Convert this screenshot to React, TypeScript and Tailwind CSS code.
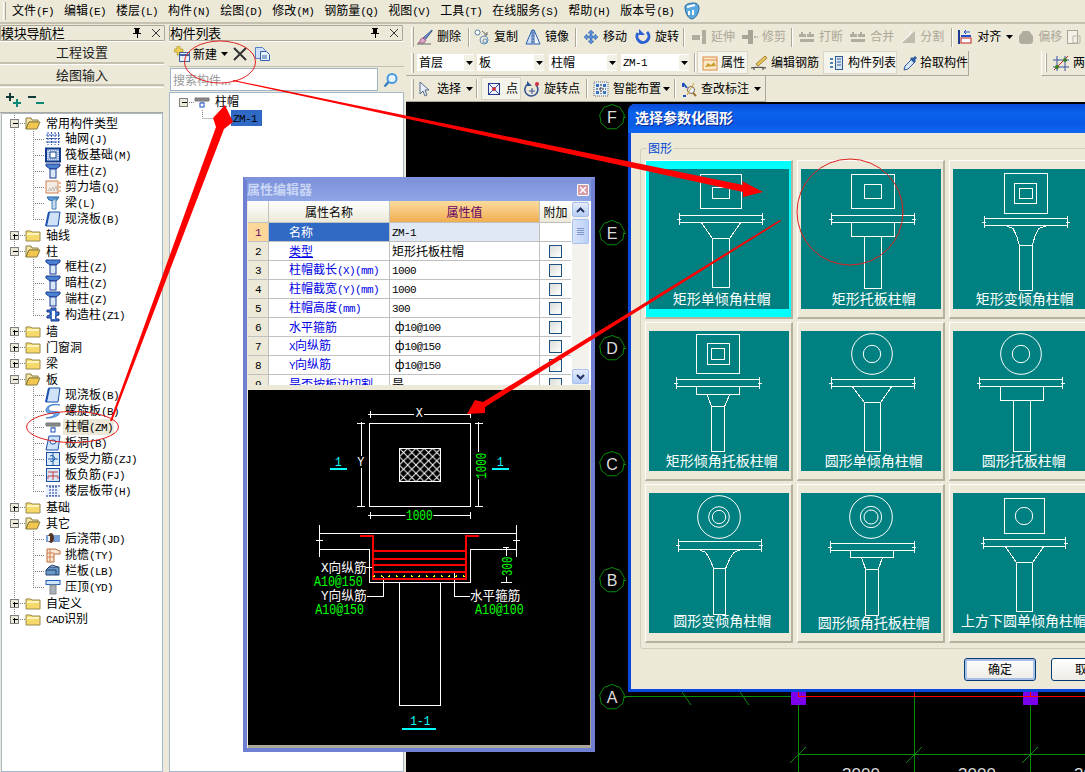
import React from "react";

const Latin = "font-['Liberation_Mono',monospace] text-[11px] tracking-[-0.6px]";

function Tx({ t }: { t: string }) {
  const parts = t.split(/([\x21-\x7e]+)/).filter(Boolean);
  return (
    <span className="whitespace-pre">
      {parts.map((p, i) => (/^[\x21-\x7e]+$/.test(p) ? <span key={i} className={Latin}>{p}</span> : <span key={i}>{p}</span>))}
    </span>
  );
}

const S = ({ children, w = 16, h = 16 }: { children: React.ReactNode; w?: number; h?: number }) => (
  <svg width={w} height={h} viewBox={`0 0 ${w} ${h}`} className="shrink-0 block">{children}</svg>
);

const ICONS: Record<string, React.ReactNode> = {
  folderOpen: <><path d="M1 3h5l1 2h6v2H4L1 14z" fill="#f5e6a8" stroke="#8a7a40" /><path d="M1 14l3-7h11l-3 7z" fill="#f0c850" stroke="#8a7a40" /></>,
  folderClosed: <><path d="M1 4h5l1 1h8v9H1z" fill="#f7d96a" stroke="#9a8a50" /><path d="M2 6h12v2H2z" fill="#fff3c0" /></>,
  grid: <path d="M3 1v13M6.5 1v13M10 1v13M13.500 1v13M1 4h14M1 7.500h14M1 11h14" stroke="#2a50b0" fill="none" strokeDasharray="2 1" />,
  raft: <><rect x="1" y="1.500" width="14" height="13" fill="#cfe0f5" stroke="#103a8a" strokeWidth="2" /><rect x="5" y="5" width="6" height="6" fill="#fff" stroke="#103a8a" /><path d="M3 3v10M13 3v10M3 3h10M3 13h10" stroke="#5a80c0" strokeDasharray="1 1" /></>,
  col: <><path d="M1 1h14v2l-4 3H5L1 3z" fill="#4a80d0" stroke="#1a3a90" /><rect x="5" y="6" width="6" height="9" fill="#d8e6f8" stroke="#1a3a90" /></>,
  wall: <><rect x="1" y="2" width="12" height="12" fill="#f4ece0" stroke="#d08050" /><path d="M3 12l2-3 1 3 2-4 1 4 2-5 1 5" stroke="#999" fill="none" strokeDasharray="1 1" /><path d="M14 4h2M14 8h2M14 12h2" stroke="#e07020" /></>,
  beam: <><path d="M2 2h12l-3 4-7-1z" fill="#60a0e0" stroke="#2060a0" /><path d="M7 6l4-3v11H7z" fill="#c8dcf0" stroke="#4080b0" /></>,
  slab: <><path d="M4 1h11l-2 14H1z" fill="#cfe2f8" stroke="#1a50b0" /><path d="M4 1l-3 14" stroke="#1a50b0" strokeWidth="2" /></>,
  gz: <><path d="M6 1h5v4h3v3l-3 1v3h3v2H6v-3H2V9l3-1V5H2V3h4z" fill="#3a70c8" stroke="#1a3a90" /><rect x="7" y="4" width="3" height="8" fill="#fff" /></>,
  spiral: <><path d="M15 2C8 1 2 3 4 7c1 2 6 1 10 2 2 2-2 5-9 6H1c5-1 9-2 8-4-3-1-7 0-8-3C0 3 8 0 15 2z" fill="#6aa8e8" stroke="#2a70c0" strokeWidth=".7" /></>,
  cap: <><path d="M1 4h14v3H1z" fill="#888" stroke="#777" /><path d="M6 7h5l-1 2H7z" fill="#aaa" /><rect x="6" y="9" width="4" height="4" fill="#fff" stroke="#1a50c0" /></>,
  hole: <><path d="M4 1h11l-2 14H1z" fill="#cfe2f8" stroke="#1a50b0" /><ellipse cx="8" cy="7" rx="3" ry="2" fill="#fff" stroke="#1a50b0" /></>,
  rs: <><rect x="1.500" y="1.500" width="13" height="13" fill="#d8e8f8" stroke="#1a50a0" /><path d="M8 2v12M3 8h10M5 5a3 3 0 1 1 0 5" stroke="#2060b0" fill="none" /></>,
  rn: <><rect x="1.500" y="1.500" width="13" height="13" fill="#d8e8f8" stroke="#1a50a0" /><path d="M3 5h10M3 9h10M8 5v8M3 9v3M13 9v3" stroke="#c04040" fill="none" /></>,
  band: <><rect x="1" y="2" width="14" height="12" fill="#eaf2fb" /><path d="M1 3h14M1 13h14M5 3v10M11 3v10M8 3v10" stroke="#1a3a90" fill="none" strokeDasharray="2 1" /></>,
  hou: <><rect x="1" y="4" width="14" height="7" fill="#7aa0d8" /><ellipse cx="6" cy="7" rx="3" ry="5" fill="#553322" /><rect x="3" y="5" width="2" height="5" fill="#eee" /></>,
  tiao: <><path d="M2 2h8l5 2v3h-6v8H2z" fill="#f8e8d8" stroke="#c06830" /><path d="M2 6h7M2 10h7M5 2v13" stroke="#d08050" /></>,
  lan: <><path d="M1 7l3-3h10v8H1z" fill="#6a98c8" stroke="#204070" /><path d="M4 4l3-2 6 2M1 7h10v5" stroke="#204070" fill="none" /></>,
  ya: <><rect x="1" y="1.500" width="14" height="4" fill="#d0e4f8" stroke="#2060c0" /><rect x="5" y="6" width="6" height="9" fill="#aab0b8" stroke="#888" /></>,
  del: <><path d="M15 1L6 9l2 2 7-9z" fill="#7090d0" stroke="#405890" /><path d="M6 9c-2 0-3 2-3 3s-1 1-2 2h6l2-3z" fill="#e0a8c8" stroke="#a06080" /><path d="M0 15h14" stroke="#666" /></>,
  copy: <><circle cx="3.500" cy="3.500" r="2.500" fill="#fff" stroke="#5080a0" /><circle cx="10" cy="11" r="4" fill="none" stroke="#6090c0" /><circle cx="11" cy="12" r="2" fill="none" stroke="#6090c0" /><path d="M8 2l5 4M13 3v3h-3" stroke="#666" fill="none" /></>,
  mirror: <><path d="M7 1L1 15h6z" fill="#cfe0f5" stroke="#2a60b0" /><path d="M9 1l6 14H9z" fill="#eef4fb" stroke="#2a60b0" /><path d="M8 0v16" stroke="#2a60b0" strokeDasharray="2 1" /></>,
  move: <path d="M8 1l3 3H9v3h3V5l3 3-3 3V9H9v3h2l-3 3-3-3h2V9H4v2L1 8l3-3v2h3V4H5z" fill="#5a90d8" stroke="#2a5aa0" strokeWidth=".5" />,
  rotate: <><path d="M3 4a6 6 0 1 0 9-1" fill="none" stroke="#2a60d0" strokeWidth="3" /><path d="M4 0v6h6z" fill="#2a60d0" /></>,
  extend: <><rect x="1" y="6" width="8" height="5" fill="#b0ad9e" /><rect x="11" y="1" width="4" height="14" fill="#b0ad9e" /><path d="M9 8h2" stroke="#fff" /></>,
  trim: <><rect x="6" y="1" width="5" height="14" fill="#a8a596" /><rect x="0" y="6" width="6" height="4" fill="#a8a596" /><path d="M12 8h4" stroke="#b8b5a6" strokeWidth="2" strokeDasharray="2 1" /></>,
  brk: <><path d="M2 3h2v2h3v3H0V5h2zM10 3h2v2h3v3H8V5h2z" fill="#b0ad9e" /><rect x="1" y="10" width="14" height="3" fill="#b0ad9e" /></>,
  split: <><path d="M1 14L10 6l5-4v12z" fill="#c0bdae" /><path d="M1 14l9-8 1-4" stroke="#fff" fill="none" /></>,
  align: <><path d="M2 1v14" stroke="#1a3a90" strokeWidth="2" /><rect x="4" y="9" width="10" height="5" fill="#fff" stroke="#c02020" /><path d="M4 7h10" stroke="#2050d0" strokeWidth="2" /><path d="M13 3H7l2-2M7 3l2 2" stroke="#2050d0" fill="none" /></>,
  offset: <path d="M5 2h6l4 5v6l-2 2H3l-2-2V7z" fill="#b0ad9e" />,
  doc: <><rect x="1.500" y="1.500" width="10" height="13" fill="#f4f2e8" stroke="#a8a596" /><path d="M7 7h7v7H7z" fill="none" stroke="#b8b5a6" /></>,
  attr: <><rect x="1" y="2" width="14" height="13" fill="#fbe8c8" stroke="#e08a40" /><path d="M1 5h14" stroke="#e08a40" /><path d="M3 12l3-4 3 2 3-3 2 4z" fill="#c8a030" /></>,
  edit: <><path d="M5 9L14 1l2 2-9 8z" fill="#f0c860" stroke="#a08030" /><path d="M0 13c4-1 10-1 15 0" stroke="#333" fill="none" /><path d="M3 13v2M12 13v2" stroke="#333" /></>,
  list: <><rect x="7.500" y="1.500" width="7" height="13" fill="#d8e6f8" stroke="#305a90" /><path d="M9 4h4M9 7h4M9 10h4" stroke="#305a90" /><path d="M2 3h3v2H2zM2 7h3v2H2zM2 11h3v2H2z" fill="#5080b0" /></>,
  pick: <><path d="M2 15l1-4 7-7 3 3-7 7z" fill="#d8e6f8" stroke="#2a5aa0" /><path d="M10 2l1 1 2-2 2 2-2 2 1 1-2 2-4-4z" fill="#2a5aa0" /></>,
  arrow: <path d="M3 1v12l3-3 2 5 2-1-2-5h4z" fill="#e8eef8" stroke="#5a6a8a" />,
  point: <><rect x="2.500" y="2.500" width="11" height="11" fill="#eef2fa" stroke="#2a3a90" /><path d="M3 3l10 10M13 3L3 13" stroke="#3050c0" /><circle cx="8" cy="8" r="2" fill="#d03040" /></>,
  rotp: <><path d="M12 4a6.500 6.500 0 1 1-8-1" fill="none" stroke="#305090" strokeWidth="1.500" /><path d="M3 0v5h5" fill="#305090" /><circle cx="13" cy="3" r="2" fill="#d03040" /><path d="M8 7v6M5 10h6" stroke="#305090" /></>,
  smart: <><rect x="1" y="1" width="14" height="14" fill="#e8f0f8" stroke="#666" strokeDasharray="1 1" /><path d="M8 3v10M3 8h10" stroke="#223" strokeDasharray="2 1" /><path d="M3 3h3v3H3zM10 3h3v3h-3zM3 10h3v3H3zM10 10h3v3h-3z" fill="#3a70c0" /></>,
  mark: <><path d="M2 2l4 5M2 15h3M2 2v4" stroke="#2050c0" strokeWidth="2" fill="none" /><circle cx="10" cy="9" r="3.500" fill="#e8f4ff" stroke="#806040" /><path d="M12 12l3 3" stroke="#a07030" strokeWidth="2" /><path d="M6 14L13 2" stroke="#d0a040" /></>,
  two: <><path d="M4 1v15M12 1v15M0 5h16M0 12h16" stroke="#3a50a0" /><path d="M1 15L15 1" stroke="#d02020" /><circle cx="12" cy="5" r="2" fill="#3a8020" /><circle cx="4" cy="12" r="2" fill="#3a8020" /></>,
  plus: <><path d="M3 0h3v3h3v3H6v3H3V6H0V3h3z" fill="#f0d050" stroke="#a08820" strokeWidth=".6" /><rect x="5.500" y="6.500" width="10" height="9" fill="#e8eef8" stroke="#4060a0" /><path d="M6 9h9" stroke="#4060a0" strokeWidth="2" /></>,
  copyDoc: <><path d="M1.500 1.500h7l3 3v8h-10z" fill="#d0e0f8" stroke="#5080c0" /><path d="M6.500 5.500h6l3 3v6h-9z" fill="#e8f0fb" stroke="#3060b0" /><path d="M8 10h5M8 12h5" stroke="#3060b0" /></>,
  search: <><circle cx="9" cy="6.500" r="4.500" fill="#e8f4ff" stroke="#4a9ae0" strokeWidth="2" /><path d="M5.500 10L1.500 14.500" stroke="#3a80c0" strokeWidth="2.500" /></>,
};

function I({ n }: { n: string }) {
  return <S>{ICONS[n]}</S>;
}

type Row = { l: 0 | 1; n: string; t: string; open?: boolean; last?: boolean; sel?: boolean };
const ROWS: Row[] = [
  { l: 0, n: "folderOpen", t: "常用构件类型", open: true },
  { l: 1, n: "grid", t: "轴网(J)" },
  { l: 1, n: "raft", t: "筏板基础(M)" },
  { l: 1, n: "col", t: "框柱(Z)" },
  { l: 1, n: "wall", t: "剪力墙(Q)" },
  { l: 1, n: "beam", t: "梁(L)" },
  { l: 1, n: "slab", t: "现浇板(B)", last: true },
  { l: 0, n: "folderClosed", t: "轴线" },
  { l: 0, n: "folderOpen", t: "柱", open: true },
  { l: 1, n: "col", t: "框柱(Z)" },
  { l: 1, n: "col", t: "暗柱(Z)" },
  { l: 1, n: "col", t: "端柱(Z)" },
  { l: 1, n: "gz", t: "构造柱(Z1)", last: true },
  { l: 0, n: "folderClosed", t: "墙" },
  { l: 0, n: "folderClosed", t: "门窗洞" },
  { l: 0, n: "folderClosed", t: "梁" },
  { l: 0, n: "folderOpen", t: "板", open: true },
  { l: 1, n: "slab", t: "现浇板(B)" },
  { l: 1, n: "spiral", t: "螺旋板(B)" },
  { l: 1, n: "cap", t: "柱帽(ZM)", sel: true },
  { l: 1, n: "hole", t: "板洞(B)" },
  { l: 1, n: "rs", t: "板受力筋(ZJ)" },
  { l: 1, n: "rn", t: "板负筋(FJ)" },
  { l: 1, n: "band", t: "楼层板带(H)", last: true },
  { l: 0, n: "folderClosed", t: "基础" },
  { l: 0, n: "folderOpen", t: "其它", open: true },
  { l: 1, n: "hou", t: "后浇带(JD)" },
  { l: 1, n: "tiao", t: "挑檐(TY)" },
  { l: 1, n: "lan", t: "栏板(LB)" },
  { l: 1, n: "ya", t: "压顶(YD)", last: true },
  { l: 0, n: "folderClosed", t: "自定义" },
  { l: 0, n: "folderClosed", t: "CAD识别" },
];

function Box({ x, y, open }: { x: number; y: number; open?: boolean }) {
  return (
    <g shapeRendering="crispEdges">
      <rect x={x - 4} y={y - 4} width="8" height="8" fill="#ece9d8" stroke="#808080" />
      <path d={`M${x - 2} ${y}h5`} stroke="#000" />
      {!open && <path d={`M${x} ${y - 2}v5`} stroke="#000" />}
    </g>
  );
}

function Prefix({ r, end }: { r: Row; end?: boolean }) {
  const dot = { stroke: "#808080", strokeDasharray: "1 1", fill: "none", shapeRendering: "crispEdges" as const };
  if (r.l === 0) {
    return (
      <S w={23}>
        <path d={end ? "M12.500 0v8" : "M12.500 0v16"} {...dot} />
        <path d="M16 8.500h7" {...dot} />
        <Box x={12.5} y={8.5} open={r.open} />
      </S>
    );
  }
  return (
    <S w={43}>
      <path d="M12.500 0v16" {...dot} />
      <path d={r.last ? "M31.500 0v8" : "M31.500 0v16"} {...dot} />
      <path d="M31 8.500h12" {...dot} />
    </S>
  );
}

function DockHeader({ title, w }: { title: string; w: string }) {
  return (
    <div className={`mt-[1px] h-[16px] ${w} flex items-center border border-[#aca899] rounded-[1px] bg-[#ece9d8] shrink-0`}>
      <span className="flex-1 text-[13px] leading-none pb-[2px] text-black tracking-[-0.3px]">{title}</span>
      <svg width="12" height="12" viewBox="0 0 12 12" className="mr-[8px]"><path d="M3 1h6v1H8v4h2v1H7v4H6V7H2V6h2V2H3z" fill="#000" /></svg>
      <svg width="10" height="10" viewBox="0 0 10 10" className="mr-[3px]"><path d="M1 1l8 8M9 1l-8 8" stroke="#333" /></svg>
    </div>
  );
}

function NavPanel() {
  return (
    <div className="w-[165px] flex flex-col shrink-0">
      <DockHeader title="模块导航栏" w="w-[165px]" />
      <div className="h-[23px] w-[164px] flex items-center justify-center border-t border-t-white border-b-2 border-b-[#c4c1b0] text-[13px] text-[#222]">工程设置</div>
      <div className="h-[22px] w-[164px] flex items-center justify-center border-t border-t-white border-b-2 border-b-[#c4c1b0] text-[13px] text-[#222]">绘图输入</div>
      <div className="h-[26px] w-[163px] mt-[1px] flex items-center gap-[6px] pl-[6px] border-t border-t-white border-b border-b-[#aca899]">
        <svg width="16" height="15" viewBox="0 0 16 15"><path d="M4 0v8M0 4h8" stroke="#123a3a" strokeWidth="2" /><path d="M11 6v8M7 10h8" stroke="#0a8878" strokeWidth="2" /></svg>
        <svg width="16" height="12" viewBox="0 0 16 12"><path d="M0 3h8" stroke="#123a3a" strokeWidth="2" /><path d="M8 9h8" stroke="#0a8878" strokeWidth="2" /></svg>
      </div>
      <div className="ml-[1px] w-[162px] flex-1 bg-white border border-[#a8b8cc] pt-[1px] text-[12px] text-black leading-none">
        {ROWS.map((r, i) => (
          <div key={i} className="h-[16px] flex items-center">
            <Prefix r={r} end={i === ROWS.length - 1} />
            <I n={r.n} />
            <span className={r.sel ? "bg-[#ece9d8] h-[16px] flex items-center ml-[2px] pl-[2px] pr-[1px]" : r.l === 0 ? "ml-[5px]" : "ml-[4px]"}><Tx t={r.t} /></span>
          </div>
        ))}
      </div>
    </div>
  );
}

function ListPanel() {
  return (
    <div className="w-[235px] ml-[4px] flex flex-col shrink-0">
      <DockHeader title="构件列表" w="w-[234px]" />
      <div className="h-[26px] flex items-center pl-[5px] border-t border-t-white border-b border-b-[#c4c1b0] text-[12px]">
        <I n="plus" />
        <span className="ml-[3px] text-black">新建</span>
        <svg width="7" height="4" viewBox="0 0 7 4" className="ml-[4px]"><path d="M0 0h7L3.500 4z" fill="#000" /></svg>
        <svg width="14" height="14" viewBox="0 0 14 14" className="ml-[5px]"><path d="M1 1l12 12M13 1L1 13" stroke="#333" strokeWidth="2" /></svg>
        <span className="ml-[7px]"><I n="copyDoc" /></span>
      </div>
      <div className="h-[25px] flex items-center pl-[1px] gap-[5px]">
        <div className="w-[208px] h-[23px] bg-white border border-[#a0b4cc] flex items-center pl-[2px] text-[12px] text-[#999]">搜索构件...</div>
        <I n="search" />
      </div>
      <div className="flex-1 bg-white border border-[#a8b8cc] text-[12px] text-black leading-none pt-[1px]">
        <div className="h-[16px] flex items-center">
          <S w={24}>
            <Box x={13.5} y={8.5} open />
            <path d="M17 8.500h7" stroke="#808080" strokeDasharray="1 1" />
          </S>
          <I n="cap" />
          <span className="ml-[5px] pb-[2px]">柱帽</span>
        </div>
        <div className="h-[16px] flex items-center">
          <S w={61}>
            <path d="M32.500 0v8M32.500 8.500H61" stroke="#808080" strokeDasharray="1 1" fill="none" />
          </S>
          <span className="h-[16px] w-[31px] bg-[#316ac5] flex items-center pl-[2px] text-black"><Tx t="ZM-1" /></span>
        </div>
      </div>
    </div>
  );
}

function Grip() {
  return <span className="w-[3px] h-[20px] ml-[5px] border-l border-l-white border-r border-r-[#aca899] bg-[#ece9d8] shrink-0" />;
}
function Sep({ c }: { c: string }) {
  return <span className={`w-[2px] h-[19px] border-l border-l-[#aca899] border-r border-r-white shrink-0 ${c}`} />;
}
function Btn({ n, t, c = "", off }: { n: string; t: string; c?: string; off?: boolean }) {
  return (
    <span className={`flex items-center gap-[4px] shrink-0 ${c} ${off ? "text-[#aca899]" : "text-black"}`}>
      <I n={n} />
      <span className="pb-[2px]">{t}</span>
    </span>
  );
}
function Caret({ c = "" }: { c?: string }) {
  return <svg width="7" height="4" viewBox="0 0 7 4" className={`shrink-0 ${c}`}><path d="M0 0h7L3.500 4z" fill="#000" /></svg>;
}
function Sel({ t, w, c }: { t: string; w: string; c: string }) {
  return (
    <span className={`h-[17px] ${w} ${c} bg-white flex items-center pl-[2px] shrink-0 text-black`}>
      <span className="flex-1 pb-[2px]"><Tx t={t} /></span>
      <span className="w-[10px] h-[15px] bg-[#f3f1e6] flex items-center justify-center"><Caret /></span>
    </span>
  );
}

function Toolbars() {
  return (
    <div className="shrink-0 text-[12px] leading-none">
      <div className="h-[26px] flex items-center overflow-hidden">
        <Grip />
        <Btn n="del" t="删除" c="ml-[3px]" />
        <Sep c="ml-[7px]" />
        <Btn n="copy" t="复制" c="ml-[4px]" />
        <Btn n="mirror" t="镜像" c="ml-[7px]" />
        <Sep c="ml-[6px]" />
        <Btn n="move" t="移动" c="ml-[6px]" />
        <Btn n="rotate" t="旋转" c="ml-[8px]" />
        <Sep c="ml-[4px]" />
        <Btn n="extend" t="延伸" c="ml-[6px]" off />
        <Btn n="trim" t="修剪" c="ml-[7px]" off />
        <Sep c="ml-[5px]" />
        <Btn n="brk" t="打断" c="ml-[6px]" off />
        <Btn n="brk" t="合并" c="ml-[7px]" off />
        <Btn n="split" t="分割" c="ml-[6px]" off />
        <Sep c="ml-[7px]" />
        <Btn n="align" t="对齐" c="ml-[4px]" />
        <Caret c="ml-[5px]" />
        <Btn n="offset" t="偏移" c="ml-[5px]" off />
        <Btn n="doc" t="" c="ml-[4px]" off />
      </div>
      <div className="h-[26px] flex items-center overflow-hidden">
        <div className="w-[569px] h-[25px] flex items-center border-r border-b border-[#aca899]">
          <Grip />
          <Sel t="首层" w="w-[57px]" c="ml-[3px]" />
          <Sel t="板" w="w-[67px]" c="ml-[3px]" />
          <Sel t="柱帽" w="w-[68px]" c="ml-[5px]" />
          <Sel t="ZM-1" w="w-[68px]" c="ml-[4px]" />
          <Sep c="ml-[5px]" />
          <span className="ml-[1px] h-[23px] w-[51px] bg-[#f4f3ec] border border-[#d8d5c6] flex items-center pl-[4px] gap-[3px] shrink-0 text-black"><I n="attr" /><span className="pb-[2px]">属性</span></span>
          <Btn n="edit" t="编辑钢筋" c="ml-[3px] gap-[3px]" />
          <span className="ml-[4px] h-[23px] w-[74px] bg-[#f4f3ec] border border-[#d8d5c6] flex items-center pl-[4px] gap-[4px] shrink-0 text-black"><I n="list" /><span className="pb-[2px]">构件列表</span></span>
          <Btn n="pick" t="拾取构件" c="ml-[5px] !gap-[2px]" />
        </div>
        <div className="ml-[72px] h-[25px] flex-1 flex items-center border-l border-l-white border-b border-[#aca899]">
          <span className="w-[2px] h-[19px] ml-[3px] border-l border-l-white border-r border-r-[#aca899]" />
          <Btn n="two" t="两点" c="ml-[6px]" />
        </div>
      </div>
      <div className="h-[26px] w-[360px] flex items-center border-r border-b border-[#aca899]">
        <Grip />
        <span className="ml-[3px]"><I n="arrow" /></span>
        <span className="ml-[4px] pb-[2px] text-black">选择</span>
        <Caret c="ml-[5px]" />
        <Sep c="ml-[3px]" />
        <span className="ml-[3px] h-[23px] w-[40px] bg-[#f4f3ec] border border-[#d8d5c6] flex items-center pl-[4px] gap-[4px] shrink-0"><I n="point" /><span className="pb-[2px]">点</span></span>
        <Btn n="rotp" t="旋转点" c="ml-[3px] gap-[3px]" />
        <Sep c="ml-[6px]" />
        <Btn n="smart" t="智能布置" c="ml-[5px]" />
        <Caret c="ml-[2px]" />
        <Sep c="ml-[4px]" />
        <Btn n="mark" t="查改标注" c="ml-[5px]" />
        <Caret c="ml-[5px]" />
      </div>
    </div>
  );
}

function Axis({ x, y, t }: { x: number; y: number; t: string }) {
  const pts = Array.from({ length: 9 }, (_, i) => {
    const a = (i * 2 * Math.PI) / 9 - Math.PI / 2;
    return `${x + 12.5 * Math.cos(a)},${y + 12.5 * Math.sin(a)}`;
  }).join(" ");
  return (
    <g>
      <polygon points={pts} fill="#000" stroke="#0a8a0a" />
      <path d={`M${x + 12} ${y + 0.5}h2`} stroke="#0a8a0a" />
      <text x={x} y={y + 6} textAnchor="middle" fontSize="16" fill="#ddd" fontFamily="Liberation Sans, sans-serif">{t}</text>
    </g>
  );
}

function Canvas() {
  const g = "#0a8a0a";
  return (
    <div className="flex-1 bg-black overflow-hidden">
      <svg width="679" height="670" viewBox="406 102 679 670" className="block">
        {[["F", 117], ["E", 233], ["D", 348], ["C", 464], ["B", 580], ["A", 697]].map(([t, y]) => (
          <Axis key={t as string} x={612} y={y as number} t={t as string} />
        ))}
        <g shapeRendering="crispEdges">
          <path d="M625 696.500H798" stroke={g} />
          <path d="M798.500 690V772M914.500 690V772M1030.500 690V772M798 754.500H1085" stroke={g} />
          <rect x="791" y="692" width="15" height="13" fill="#7a00ee" />
          <rect x="1023" y="692" width="15" height="13" fill="#7a00ee" />
          <path d="M798 696.500H1085M798.500 691v5M914.500 691v5M1030.500 691v5" stroke="#ff0000" />
        </g>
        <path d="M682 692l9 13M740 692l9 13M790 763l16-16M906 763l16-16M1022 763l16-16" stroke={g} />
        <g fill="#ddd" fontSize="17" fontFamily="Liberation Sans, sans-serif" textAnchor="middle">
          <text x="861" y="780">3000</text>
          <text x="977" y="780">3000</text>
          <text x="1093" y="780">3000</text>
        </g>
      </svg>
    </div>
  );
}

const PROPS = [
  ["柱帽截长(X)(mm)", "1000"],
  ["柱帽截宽(Y)(mm)", "1000"],
  ["柱帽高度(mm)", "300"],
  ["水平箍筋", " ф10@100"],
  ["X向纵筋", " ф10@150"],
  ["Y向纵筋", " ф10@150"],
  ["是否按板边切割", "是"],
];

function Check() {
  return <span className="w-[13px] h-[13px] border border-[#1c5180] bg-linear-to-br from-[#dcdcd7] to-white block" />;
}

function PropRow({ i, name, val, first, link }: { i: number; name: string; val: string; first?: boolean; link?: boolean }) {
  return (
    <div className="h-[19px] flex border-b border-[#c0c0c0] shrink-0">
      <div className={`w-[21px] flex items-center justify-center border-r border-[#c0c0c0] ${first ? "bg-[#fcd79a] text-[#660066]" : "bg-[#ece9d8] text-black"}`}><Tx t={String(i)} /></div>
      <div className={`w-[121px] flex items-center pl-[20px] border-r border-[#c0c0c0] ${first ? "bg-[#316ac5] text-white" : "bg-white text-[#0000e6]"}`}>
        {link ? <span className="underline">{name}</span> : <Tx t={name} />}
      </div>
      <div className={`w-[150px] flex items-center pl-[2px] border-r border-[#c0c0c0] text-black ${first ? "bg-[#dfe8f4]" : "bg-white"}`}><Tx t={val} /></div>
      <div className="w-[31px] flex items-center justify-center bg-white">{!first && <Check />}</div>
    </div>
  );
}

function SecText({ x, y, w, t, c = "#fff", fs = 39 }: { x: number; y: number; w: number; t: string; c?: string; fs?: number }) {
  return <text x={x} y={y} textLength={w} lengthAdjust="spacingAndGlyphs" fontSize={fs} fill={c} fontFamily="Liberation Mono, Noto Sans CJK SC, monospace">{t}</text>;
}

function Section() {
  const dots = Array.from({ length: 13 }, (_, i) => 403 + i * 22.4);
  return (
    <svg width="342" height="357" viewBox="24 0 1026 1071" className="block">
      <defs>
        <pattern id="hatch" width="25" height="25" patternUnits="userSpaceOnUse" x="478" y="175">
          <path d="M0 0L25 25M25 0L0 25" stroke="#fff" strokeWidth="3" />
        </pattern>
      </defs>
      <g fill="none" stroke="#fff" strokeWidth="3" shapeRendering="crispEdges">
        <path d="M385 72H692M390 64V84M690 64V84" />
        <rect x="388" y="100" width="304" height="249" />
        <rect x="478" y="175" width="124" height="99" fill="url(#hatch)" />
        <path d="M363 95V352M352 100H374M352 349H374" />
        <path d="M716 97V352M706 100H728M706 349H728" />
        <path d="M385 376H692M390 366V386M690 366V386" />
        <path d="M238 430H830M238 478H388M692 478H830M238 405V500M830 405V500M228 452H250M818 452H840" />
        <path d="M388 478V578H692V478M478 578V946H602V578" />
        <path d="M378 533H399M380 619H430V560M643 545V619H690" />
        <path d="M800 470V578M782 578H815M788 472H808" />
      </g>
      <g fill="none" stroke="#ff0000" strokeWidth="6" shapeRendering="crispEdges">
        <path d="M360 439H399V566H679V439H717" />
        <path d="M399 482H679M399 506H679M399 525H679M399 546H679" />
      </g>
      {dots.map((x) => <path key={x} d={`M${x - 3} 559H${x + 3}M${x} 556V562`} stroke="#ffff00" strokeWidth="3" shapeRendering="crispEdges" />)}
      <rect x="522" y="52" width="30" height="36" fill="#000" />
      <rect x="348" y="198" width="30" height="36" fill="#000" />
      <rect x="496" y="358" width="84" height="36" fill="#000" />
      <rect x="706" y="186" width="36" height="82" fill="#000" />
      <rect x="785" y="498" width="36" height="62" fill="#000" />
      <SecText x={527} y={81} w={21} t="X" />
      <SecText x={352} y={228} w={21} t="Y" />
      <SecText x={498} y={390} w={80} t="1000" c="#00ff00" fs={42} />
      <g transform="rotate(-90 737 266)"><SecText x={737} y={266} w={78} t="1000" c="#00ff00" fs={42} /></g>
      <g transform="rotate(-90 816 558)"><SecText x={816} y={558} w={58} t="300" c="#00ff00" fs={42} /></g>
      <SecText x={285} y={228} w={20} t="1" c="#00ffff" />
      <SecText x={771} y={228} w={20} t="1" c="#00ffff" />
      <path d="M270 237H321M756 237H807M486 1016H588" stroke="#00ffff" strokeWidth="5" shapeRendering="crispEdges" />
      <SecText x={511} y={1005} w={60} t="1-1" c="#00ffff" />
      <SecText x={243} y={546} w={137} t="X向纵筋" />
      <SecText x={222} y={588} w={146} t="A10@150" c="#00ff00" fs={42} />
      <SecText x={243} y={630} w={137} t="Y向纵筋" />
      <SecText x={226} y={672} w={146} t="A10@150" c="#00ff00" fs={42} />
      <SecText x={690} y={630} w={151} t="水平箍筋" />
      <SecText x={705} y={672} w={146} t="A10@100" c="#00ff00" fs={42} />
    </svg>
  );
}

function PropWindow() {
  return (
    <div className="absolute left-[243px] top-[177px] w-[352px] h-[575px] bg-[#ece9d8] border-[4px] border-[#6f7fd2] border-t-[#7f93dc] flex flex-col text-[12px] leading-none">
      <div className="h-[20px] pb-[3px] bg-linear-to-b from-[#7f93dc] to-[#8ea6e6] flex items-center shrink-0">
        <span className="flex-1 pb-[3px] text-[13px] font-bold text-[#c9d5f5]">属性编辑器</span>
        <span className="w-[12px] h-[12px] mr-[2px] bg-[#d79aa6] border border-white flex items-center justify-center rounded-[1px]">
          <svg width="8" height="8" viewBox="0 0 8 8"><path d="M1 1l6 6M7 1L1 7" stroke="#fff" strokeWidth="1.500" /></svg>
        </span>
      </div>
      <div className="h-[184px] flex overflow-hidden bg-white shrink-0 ml-[1px]">
        <div className="w-[323px] flex flex-col">
          <div className="h-[22px] flex border-b border-[#c0c0c0] text-center shrink-0">
            <div className="w-[21px] border-r border-[#c0c0c0] bg-linear-to-b from-white to-[#ece9d8]" />
            <div className="w-[121px] border-r border-[#c0c0c0] bg-linear-to-b from-white to-[#ece9d8] flex items-center justify-center text-black">属性名称</div>
            <div className="w-[150px] border-r border-[#c0c0c0] bg-linear-to-b from-[#fbdc9e] to-[#f0ae4e] flex items-center justify-center text-[#660066]">属性值</div>
            <div className="w-[31px] bg-linear-to-b from-white to-[#ece9d8] flex items-center justify-center text-black">附加</div>
          </div>
          <PropRow i={1} name="名称" val="ZM-1" first />
          <PropRow i={2} name="类型" val="矩形托板柱帽" link />
          {PROPS.map((p, i) => <PropRow key={i} i={i + 3} name={p[0]} val={p[1]} />)}
        </div>
        <div className="w-[17px] ml-[1px] bg-[#f3f2ec] flex flex-col py-[1px] shrink-0">
          <div className="h-[15px] bg-linear-to-b from-[#e4ecfb] to-[#b8cdf5] border border-[#a8c0ee] rounded-[2px] flex items-center justify-center">
            <svg width="9" height="6" viewBox="0 0 9 6"><path d="M1 5l3.500-3.500L8 5" stroke="#203060" strokeWidth="2" fill="none" /></svg>
          </div>
          <div className="h-[25px] mt-[2px] bg-linear-to-r from-[#d8e4fb] to-[#bcd0f6] border border-[#a8c0ee] rounded-[2px] flex flex-col gap-[1px] items-center justify-center">
            <span className="w-[7px] h-[1px] bg-[#7f97c8]" /><span className="w-[7px] h-[1px] bg-[#7f97c8]" /><span className="w-[7px] h-[1px] bg-[#7f97c8]" /><span className="w-[7px] h-[1px] bg-[#7f97c8]" />
          </div>
          <div className="flex-1" />
          <div className="h-[15px] bg-linear-to-b from-[#e4ecfb] to-[#b8cdf5] border border-[#a8c0ee] rounded-[2px] flex items-center justify-center">
            <svg width="9" height="6" viewBox="0 0 9 6"><path d="M1 1l3.500 3.500L8 1" stroke="#203060" strokeWidth="2" fill="none" /></svg>
          </div>
        </div>
      </div>
      <div className="mt-[5px] ml-[1px] flex-1 bg-black overflow-hidden border-b-[3px] border-r-[1px] border-[#aca899]">
        <Section />
      </div>
    </div>
  );
}

function Slab({ a, b, t, u }: { a: number; b: number; t: number; u: number }) {
  const m = (t + u) / 2;
  return <path d={`M${a} ${t}H${b}M${a} ${u}H${b}M${a} ${t - 7}V${u + 6}M${b} ${t - 7}V${u + 6}M${a - 7} ${m}H${a + 6}M${b - 6} ${m}H${b + 7}`} />;
}
const R = (x: number, y: number, x2: number, y2: number) => <rect x={x} y={y} width={x2 - x} height={y2 - y} />;
const C = (x: number, y: number, r: number) => <circle cx={x} cy={y} r={r} shapeRendering="auto" />;

function Cap({ title, tx, by, sel, children }: { title: string; tx: number; by: number; sel?: boolean; children: React.ReactNode }) {
  return (
    <div className={`w-[148px] h-[159px] pl-[4px] pt-[9px] border-t border-l border-r-2 border-b-2 border-t-white border-l-white border-r-[#b4b1a0] border-b-[#b4b1a0] ${sel ? "bg-[#00ffff]" : "bg-[#ece9d8]"}`}>
      <svg width="140" height="140" viewBox="0 0 420 420" className="block bg-[#008080] -ml-[1px] -mt-[1px]">
        <g fill="none" stroke="#fff" strokeWidth="3" shapeRendering="crispEdges">{children}</g>
        <text x={tx} y={by} fontSize="42" fill="#fff" fontFamily="Noto Sans CJK SC, sans-serif">{title}</text>
      </svg>
    </div>
  );
}

function Dialog() {
  return (
    <div className="absolute left-[628px] top-[104px] w-[520px] h-[588px] bg-[#ece9d8] border-[3px] border-t-0 border-[#0a48dc] rounded-tl-[7px] flex flex-col text-[12px] leading-none">
      <div className="h-[29px] -mx-[3px] pb-[3px] rounded-tl-[7px] bg-[linear-gradient(180deg,#0a4ad8_0%,#0a62ec_30%,#0a5ae6_70%,#1168f2_100%)] flex items-center pl-[7px] shrink-0">
        <span className="text-[14px] font-bold text-white [text-shadow:1px_1px_0_#0a2a90]">选择参数化图形</span>
      </div>
      <fieldset className="ml-[9px] mt-[8px] w-[470px] h-[508px] border border-[#d0cfbe] rounded-[3px] pl-[4px] pt-[4px] shrink-0">
        <legend className="ml-[2px] px-[1px] pb-[1px] text-[#0046d5] leading-[14px]">图形</legend>
        <div className="grid grid-cols-[148px_148px_148px] gap-x-[4px] gap-y-[3px]">
          <Cap title="矩形单倾角柱帽" tx={71} by={404} sel>
            {R(154, 16, 278, 119)}{R(190, 54, 242, 89)}
            <Slab a={91} b={341} t={140} u={161} />
            <path d="M157 161L190 208M275 161L242 208" />
            {R(190, 208, 242, 356)}
          </Cap>
          <Cap title="矩形托板柱帽" tx={92} by={404}>
            {R(151, 16, 281, 119)}{R(190, 46, 242, 89)}
            <Slab a={91} b={339} t={140} u={161} />
            {R(151, 161, 281, 203)}{R(190, 203, 242, 359)}
          </Cap>
          <Cap title="矩形变倾角柱帽" tx={68} by={404}>
            {R(154, 13, 284, 134)}{R(185, 43, 251, 104)}{R(199, 58, 237, 89)}
            <Slab a={94} b={344} t={149} u={170} />
            <path d="M158 170L180 178L191 201L199 229M281 170L258 178L246 201L238 229" />
            {R(199, 229, 238, 364)}
          </Cap>
          <Cap title="矩形倾角托板柱帽" tx={50} by={404}>
            {R(142, 10, 272, 128)}{R(175, 37, 242, 101)}{R(187, 52, 227, 86)}
            <Slab a={82} b={332} t={145} u={167} />
            {R(142, 167, 272, 191)}
            <path d="M175 191L187 226M242 191L227 226" />
            {R(187, 226, 227, 361)}
          </Cap>
          <Cap title="圆形单倾角柱帽" tx={71} by={404}>
            {C(213, 69, 61)}{C(213, 69, 26)}
            <Slab a={91} b={339} t={145} u={167} />
            <path d="M154 167L190 214M272 167L239 214" />
            {R(190, 214, 239, 361)}
          </Cap>
          <Cap title="圆形托板柱帽" tx={86} by={404}>
            {C(204, 69, 61)}{C(204, 69, 26)}
            <Slab a={79} b={329} t={146} u={167} />
            {R(142, 167, 272, 209)}{R(181, 209, 232, 361)}
          </Cap>
          <Cap title="圆形变倾角柱帽" tx={73} by={400}>
            {C(210, 72, 64)}{C(210, 72, 31)}{C(210, 72, 20)}
            <Slab a={88} b={336} t={145} u={170} />
            <path d="M150 170L170 178L181 196L194 226M275 170L255 178L243 196L230 226" />
            {R(194, 226, 230, 364)}
          </Cap>
          <Cap title="圆形倾角托板柱帽" tx={50} by={406}>
            {C(210, 72, 64)}{C(210, 72, 32)}{C(210, 72, 21)}
            <Slab a={88} b={339} t={151} u={173} />
            {R(148, 173, 278, 194)}
            <path d="M182 194L194 229M244 194L232 229" />
            {R(194, 229, 232, 367)}
          </Cap>
          <Cap title="上方下圆单倾角柱帽" tx={24} by={400}>
            {R(154, 16, 274, 121)}{C(213, 69, 26)}
            <Slab a={91} b={338} t={139} u={161} />
            <path d="M157 161L190 208M272 161L239 208" />
            {R(190, 208, 239, 355)}
          </Cap>
        </div>
      </fieldset>
      <div className="flex ml-[333px] mt-[9px] gap-[15px]">
        <div className="w-[72px] h-[23px] pb-[2px] border border-[#003c74] rounded-[3px] bg-linear-to-b from-white to-[#ecebe5] flex items-center justify-center text-black shadow-[inset_0_0_0_2px_#a8c0e8]">确定</div>
        <div className="w-[72px] h-[23px] pb-[2px] border border-[#003c74] rounded-[3px] bg-linear-to-b from-white to-[#ecebe5] flex items-center justify-center text-black">取消</div>
      </div>
    </div>
  );
}

function Marks() {
  return (
    <svg width="1085" height="772" viewBox="0 0 1085 772" className="absolute inset-0 pointer-events-none">
      <ellipse cx="220" cy="62" rx="35.500" ry="21" fill="none" stroke="#e02020" />
      <ellipse cx="72.500" cy="427" rx="46" ry="15.500" fill="none" stroke="#e02020" />
      <circle cx="850" cy="212" r="53" fill="none" stroke="#e02020" />
      <polygon points="110,421 216,127 213,118 225,105 233,122 224,129 112,421" fill="#ff0000" />
      <polygon points="233,80 743,185 742,181 763,192 743,197 743,192 233,81" fill="#ff0000" />
      <polygon points="780,220 483,402 475,400 467,414 485,413 485,407 781,221" fill="#ff0000" />
    </svg>
  );
}

export default function App() {
  const menu = ["文件(F)", "编辑(E)", "楼层(L)", "构件(N)", "绘图(D)", "修改(M)", "钢筋量(Q)", "视图(V)", "工具(T)", "在线服务(S)", "帮助(H)", "版本号(B)"];
  return (
    <div className="relative w-[1085px] h-[772px] overflow-hidden bg-[#ece9d8] flex flex-col font-['Noto_Sans_CJK_SC','Liberation_Sans',sans-serif]">
      <div className="h-[24px] flex items-center gap-[10px] pl-[3px] border-b-2 border-[#c4c1b0] text-[12px] leading-none text-black shrink-0">
        <span className="w-[3px] h-[18px] -mr-[4px] border-l border-l-white border-r border-r-[#aca899] shrink-0" />
        {menu.map((m) => <Tx key={m} t={m} />)}
        <svg width="16" height="18" viewBox="0 0 16 18" className="shrink-0"><path d="M1 5c0-3 5-4 9-4 3 0 5 2 5 5s-2 10-7 11c-4 0-7-7-7-12z" fill="#5aa8e0" stroke="#2a6aa0" /><path d="M5 9v4M9 8v5M3 5l8-2" stroke="#fff" strokeWidth="2" fill="none" /></svg>
      </div>
      <div className="flex-1 flex min-h-0">
        <NavPanel />
        <ListPanel />
        <div className="flex-1 ml-[2px] flex flex-col min-w-0">
          <Toolbars />
          <Canvas />
        </div>
      </div>
      <PropWindow />
      <Dialog />
      <Marks />
    </div>
  );
}
